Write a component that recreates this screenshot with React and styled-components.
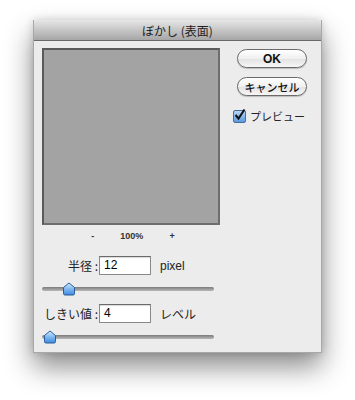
import React from 'react';
import styled, { createGlobalStyle } from 'styled-components';

const GlobalStyle = createGlobalStyle`
  html, body {
    margin: 0;
    padding: 0;
    background: #ffffff;
    width: 355px;
    height: 400px;
    overflow: hidden;
    font-family: "Liberation Sans", "Noto Sans CJK JP", sans-serif;
  }
`;

const Page = styled.div`
  padding: 20px 0 0 33px;
`;

const Dialog = styled.div`
  width: 289px;
  height: 333px;
  box-sizing: border-box;
  background: #ececec;
  border: 1px solid #a8a8a8;
  border-top: none;
  box-shadow: 0 14px 26px rgba(0, 0, 0, 0.45), 0 0 8px rgba(0, 0, 0, 0.15);
  display: flex;
  flex-direction: column;
`;

const TitleBar = styled.div`
  height: 20px;
  background: linear-gradient(#e6e6e6, #a6a6a6);
  border-bottom: 1px solid #6a6a6a;
  display: flex;
  align-items: center;
  justify-content: center;
  font-size: 12px;
  color: #222;
  font-family: "Noto Sans CJK JP", sans-serif;
  border-radius: 3px 3px 0 0;
`;

const Body = styled.div`
  display: flex;
  padding: 7px 0 0 8px;
`;

const LeftCol = styled.div`
  width: 180px;
  display: flex;
  flex-direction: column;
`;

const Preview = styled.div`
  width: 178px;
  height: 177px;
  box-sizing: border-box;
  background: #a3a3a3;
  border: 2px solid #5a5a5a;
  border-right-color: #6e6e6e;
  border-bottom-color: #6e6e6e;
`;

const ZoomRow = styled.div`
  display: flex;
  justify-content: center;
  gap: 26px;
  font-size: 9px;
  font-weight: bold;
  color: #333;
  margin-top: 6px;
  height: 12px;
  padding-left: 2px;
`;

const FieldRow = styled.div`
  display: flex;
  align-items: center;
  margin-top: ${p => p.$top}px;
  height: 19px;
`;

const Label = styled.div`
  width: 56px;
  text-align: right;
  font-size: 12px;
  color: #222;
  font-family: "Noto Sans CJK JP", sans-serif;
  padding-right: 1px;
  white-space: nowrap;
`;

const Input = styled.div`
  width: 52px;
  height: 19px;
  box-sizing: border-box;
  background: #fff;
  border: 1px solid #8a8a8a;
  border-top-color: #6a6a6a;
  box-shadow: inset 0 1px 1px rgba(0,0,0,0.15);
  font-size: 12px;
  padding: 1px 4px;
  color: #000;
`;

const Unit = styled.div`
  margin-left: 9px;
  font-size: 12px;
  color: #222;
  font-family: "Liberation Sans", "Noto Sans CJK JP", sans-serif;
`;

const SliderWrap = styled.div`
  position: relative;
  height: 14px;
  width: 174px;
  margin-top: ${p => p.$top}px;
  margin-left: -2px;
`;

const Track = styled.div`
  position: absolute;
  left: 2px;
  right: 0;
  top: 5px;
  height: 4px;
  border-radius: 2px;
  background: linear-gradient(#7a7a7a, #b8b8b8);
`;

const Thumb = styled.svg`
  position: absolute;
  top: 0;
`;

const RightCol = styled.div`
  margin-left: 11px;
  display: flex;
  flex-direction: column;
  align-items: flex-start;
`;

const Button = styled.div`
  width: 70px;
  height: 19px;
  box-sizing: border-box;
  border: 1px solid #6a6a6a;
  border-radius: 10px;
  background: linear-gradient(#ffffff, #f0f0f0 50%, #e2e2e2 51%, #f6f6f6);
  display: flex;
  align-items: center;
  justify-content: center;
  font-size: ${p => p.$size}px;
  font-weight: ${p => p.$weight};
  color: #111;
  margin-left: 4px;
  margin-top: ${p => p.$top}px;
  font-family: "Liberation Sans", "Noto Sans CJK JP", sans-serif;
  box-shadow: 0 1px 1px rgba(0,0,0,0.2);
`;

const CheckRow = styled.div`
  display: flex;
  align-items: center;
  margin-top: 12px;
  font-size: 11px;
  color: #222;
  font-family: "Noto Sans CJK JP", sans-serif;
  gap: 4px;
`;

const Box = styled.div`
  width: 11px;
  height: 11px;
  border: 1px solid #4a6a9a;
  border-radius: 2px;
  background: linear-gradient(#b8d6f6, #5a9ae0);
  position: relative;
`;

function SliderThumb({ left }) {
  return (
    <Thumb style={{ left }} width="14" height="14" viewBox="0 0 14 14">
      <defs>
        <linearGradient id="tg" x1="0" y1="0" x2="0" y2="1">
          <stop offset="0" stopColor="#d8ecff" />
          <stop offset="0.5" stopColor="#7fb8ef" />
          <stop offset="1" stopColor="#3f8ae0" />
        </linearGradient>
      </defs>
      <path d="M7 1 L12.5 5.5 V11.5 Q12.5 13 11 13 H3 Q1.5 13 1.5 11.5 V5.5 Z" fill="url(#tg)" stroke="#2a5a9a" strokeWidth="1" />
    </Thumb>
  );
}

export default function App() {
  return (
    <>
      <GlobalStyle />
      <Page>
        <Dialog>
          <TitleBar>ぼかし (表面)</TitleBar>
          <Body>
            <LeftCol>
              <Preview />
              <ZoomRow>
                <span>-</span>
                <span>100%</span>
                <span>+</span>
              </ZoomRow>
              <FieldRow $top={13}>
                <Label>半径 :</Label>
                <Input>12</Input>
                <Unit>pixel</Unit>
              </FieldRow>
              <SliderWrap $top={7}>
                <Track />
                <SliderThumb left={22} />
              </SliderWrap>
              <FieldRow $top={8}>
                <Label>しきい値 :</Label>
                <Input>4</Input>
                <Unit>レベル</Unit>
              </FieldRow>
              <SliderWrap $top={7}>
                <Track />
                <SliderThumb left={3} />
              </SliderWrap>
            </LeftCol>
            <RightCol>
              <Button $top={1} $size={12} $weight="bold">OK</Button>
              <Button $top={9} $size={11} $weight={500}>キャンセル</Button>
              <CheckRow>
                <Box>
                  <svg width="13" height="13" viewBox="0 0 13 13" style={{ position: 'absolute', left: -1, top: -3 }}>
                    <path d="M2.5 7 L5.5 10.5 L11.5 1.5" fill="none" stroke="#111" strokeWidth="2" />
                  </svg>
                </Box>
                プレビュー
              </CheckRow>
            </RightCol>
          </Body>
        </Dialog>
      </Page>
    </>
  );
}
